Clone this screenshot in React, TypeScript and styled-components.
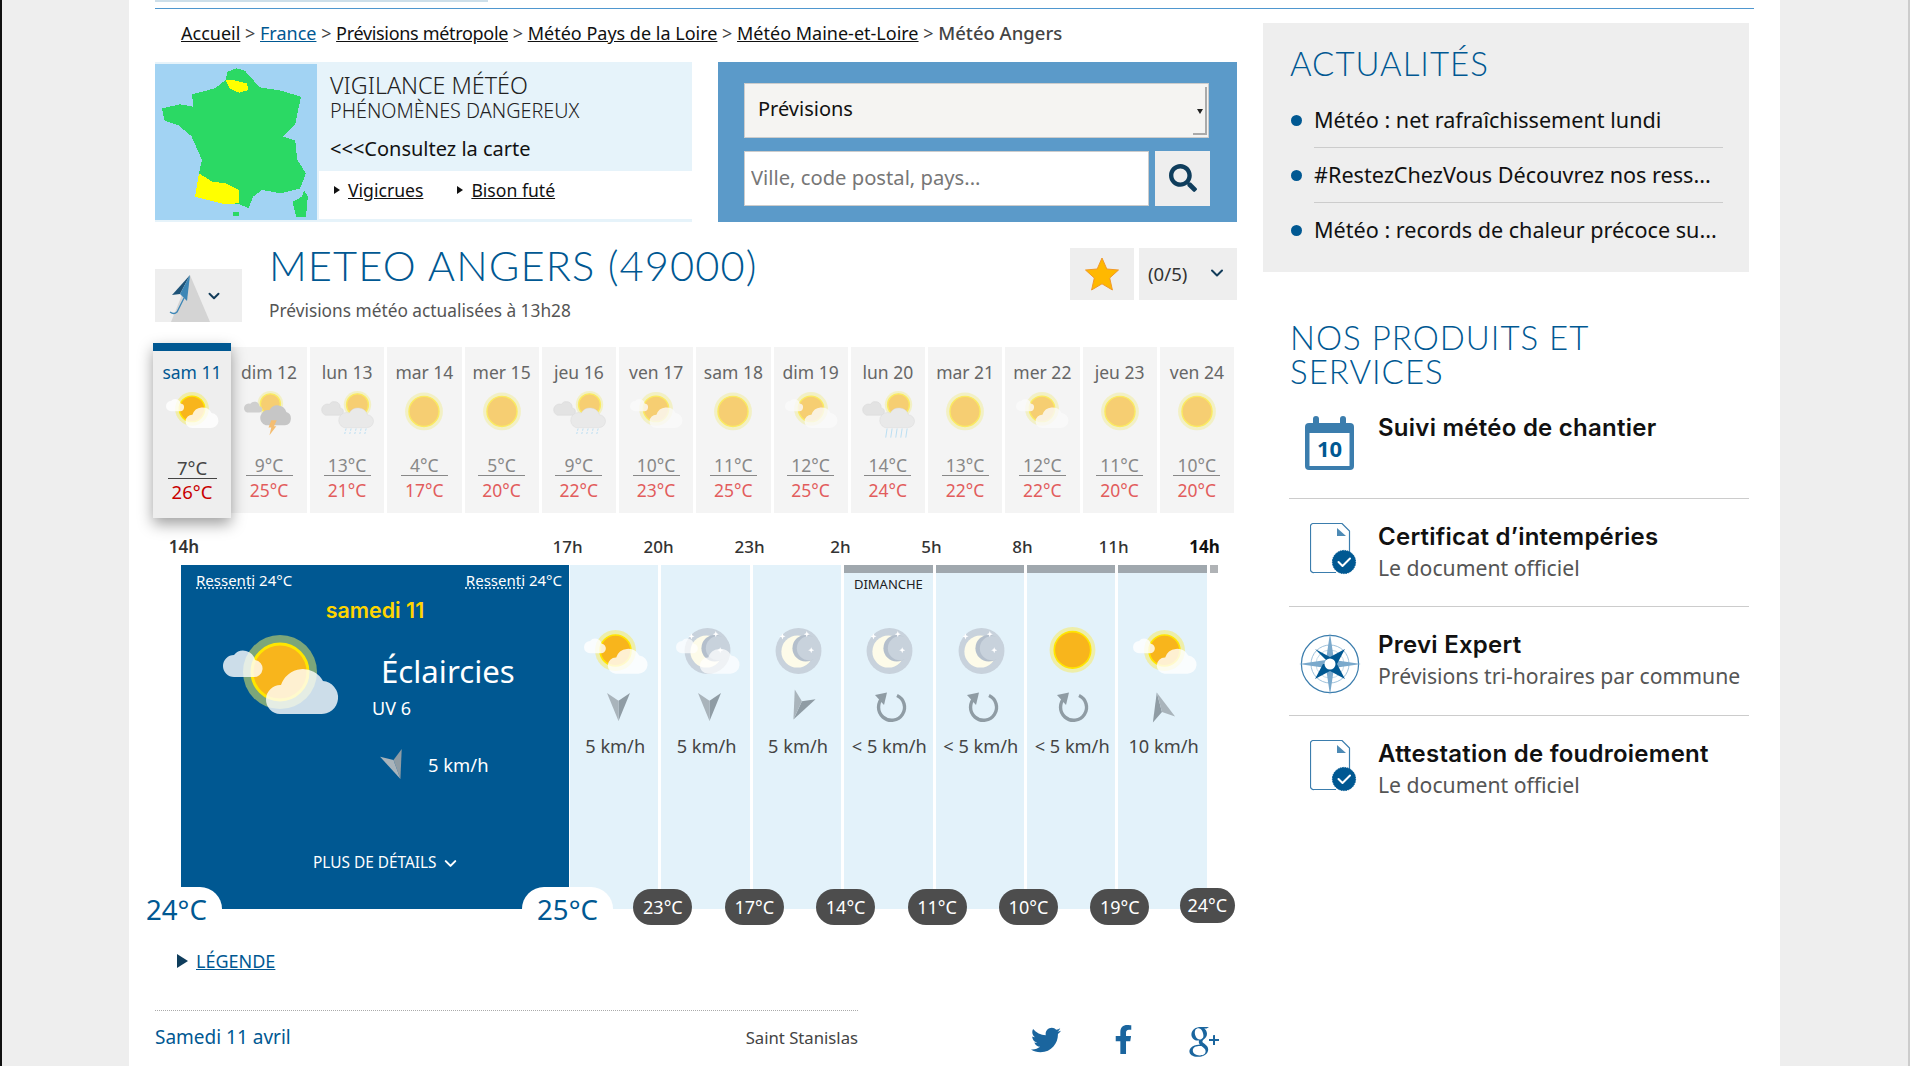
import React from 'react';
import styled, { createGlobalStyle } from 'styled-components';
import { ChevronDown } from 'lucide-react';
import { FaTwitter, FaFacebookF, FaSearch } from 'react-icons/fa';
import { TiSocialGooglePlus } from 'react-icons/ti';

const BLUE = '#005892';
const BODY = '"Noto Sans", "Open Sans", "Liberation Sans", sans-serif';
const LIGHT = '"Lato", "Open Sans", sans-serif';
const ROUND = '"Inter", "Lato", sans-serif';

const Global = createGlobalStyle`
  html, body { margin: 0; padding: 0; background: #eee; overflow: hidden; }
  * { box-sizing: border-box; }
  a { color: inherit; }
`;

const Page = styled.div`
  width: 1910px; height: 1066px; overflow: hidden; background: #eee;
  border-left: 2px solid #111; border-right: 2px solid #ccc;
  font-family: ${BODY}; color: #222;
`;
const Sheet = styled.div`
  margin-left: 127px; width: 1651px; height: 1066px; background: #fff; padding: 0 26px;
`;
const TopBand = styled.div`width: 333px; height: 2px; background: #cddfea;`;
const TopLine = styled.div`margin-top: 6px; height: 1px; background: #4f97cf;`;
const Columns = styled.div`display: flex; gap: 26px; padding-top: 14px;`;
const LeftCol = styled.div`width: 1082px; flex: none;`;
const RightCol = styled.div`width: 486px; flex: none;`;

const Crumbs = styled.nav`
  height: 39px; padding-left: 26px; font-size: 18px; line-height: 20px; color: #444;
  a { color: #111; }
  a.on { color: ${BLUE}; }
  a.tight { letter-spacing: -0.32px; }
`;
const CrumbHere = styled.span`font-size: 18.5px; font-weight: 500;`;
const TopRow = styled.div`display: flex; justify-content: space-between; height: 160px;`;

const Vigilance = styled.div`
  width: 537px; height: 160px; background: #e6f3fa; display: flex; padding-top: 2px;
`;
const MapFrame = styled.svg`width: 162px; height: 156px; flex: none; display: block;`;
const VigiBody = styled.div`flex: 1; margin-left: 2px; display: flex; flex-direction: column;`;
const VigiTop = styled.div`height: 107px; padding: 8px 0 0 11px; color: #222;`;
const VigiTitle = styled.div`font-weight: 300; font-size: 23.3px; line-height: 26px; color: #222;`;
const VigiSub = styled.div`font-weight: 300; font-size: 19.8px; line-height: 26px;`;
const VigiCta = styled.div`font-size: 20px; line-height: 26px; margin-top: 12px; color: #111;`;
const VigiLinks = styled.div`
  height: 48px; background: #fff; display: flex; align-items: center; padding-left: 15px; padding-bottom: 10px; font-size: 17.6px; gap: 34px;
  a { color: #111; }
`;
const VigiLink = styled.span`
  display: inline-flex; align-items: center; gap: 8px;
  &::before { content: ''; border-left: 6px solid #111; border-top: 4px solid transparent; border-bottom: 4px solid transparent; }
`;

const SearchBox = styled.div`
  width: 519px; height: 160px; background: #5b9ac9; padding: 21px 27px 0 26px;
`;
const FakeSelect = styled.div`
  height: 55px; width: 465px; background: #f5f4f2; border: 1px solid #ccc; display: flex; align-items: center;
  padding: 0 0 4px 13px; font-size: 20px; color: #111; position: relative;
  &::after { content: ''; position: absolute; right: 1px; top: 3px; bottom: 2px; width: 12px; border-right: 2px solid #aaa; border-bottom: 2px solid #aaa; clip-path: polygon(70% 0, 100% 0, 100% 100%, 0 100%, 0 96%, 70% 96%); }
  &::before { content: ''; position: absolute; right: 5px; top: 25px; border-top: 5px solid #222; border-left: 3px solid transparent; border-right: 3px solid transparent; }
`;
const SearchRow = styled.div`display: flex; margin-top: 13px; gap: 6px;`;
const CityInput = styled.input`
  width: 406px; height: 55px; background: #fff; border: 1px solid #ccc; padding: 0 6px 3px; font-family: ${BODY}; font-size: 20.2px; color: #333;
  &::placeholder { color: #777; opacity: 1; }
`;
const GoButton = styled.button`
  width: 55px; height: 55px; background: #eee; border: 0; padding: 0 0 2px; display: flex; align-items: center; justify-content: center; color: #0f3d5c;
`;

const TitleRow = styled.div`display: flex; height: 121px;`;
const UmbrellaBox = styled.div`
  width: 87px; height: 53px; margin-top: 47px; background: #eee; display: flex; align-items: center; padding-left: 11px; flex: none; color: #123c5a;
`;
const UmbrellaArt = styled.svg`flex: none; margin-right: -5px;`;
const TitleBlock = styled.div`margin-left: 27px; flex: 1; padding-top: 17px;`;
const PageTitle = styled.h1`
  margin: 0; font-family: ${LIGHT}; font-weight: 300; font-size: 41.6px; line-height: 52px; color: ${BLUE}; letter-spacing: 1.1px; white-space: nowrap;
`;
const Updated = styled.div`font-size: 17.3px; line-height: 24px; margin-top: 8px; color: #555;`;
const FavBlock = styled.div`display: flex; gap: 5px; margin-top: 26px; height: 52px;`;
const StarBtn = styled.div`width: 64px; background: #eee; display: flex; align-items: center; justify-content: center;`;
const CountBtn = styled.div`
  width: 98px; background: #eee; display: flex; align-items: center; padding: 0 0 2px 9px; gap: 20px; font-size: 18.6px; color: #333;
`;

const Strip = styled.div`display: flex; gap: 3px; height: 175px; align-items: flex-start; margin-left: -2px; width: 1081px;`;
const DayCell = styled.div<{ $on?: boolean; $wide?: boolean }>`
  position: relative; display: flex; flex-direction: column; align-items: center; background: ${p => p.$on ? '#eee' : '#f4f4f4'};
  ${p => p.$on ? `
    flex: 0 0 78px; height: 175px; margin-right: -3px; border-top: 8px solid ${BLUE}; padding-top: 11px; z-index: 2;
    box-shadow: 0 6px 14px rgba(0,0,0,.38);
  ` : `
    flex: ${p.$wide ? '0 0 76px' : '1 1 0'}; min-width: 0; height: 166px; margin-top: 4px; padding-top: 15px;
  `}
`;
const DayName = styled.div<{ $on?: boolean }>`
  font-size: 17.5px; line-height: 20px; white-space: nowrap; color: ${p => p.$on ? BLUE : '#666'};
`;
const DayIcon = styled.div<{ $on?: boolean; $drop?: boolean }>`
  height: 52px; margin-top: 10px; padding-top: ${p => p.$drop ? '3px' : '0'}; opacity: ${p => p.$on ? 1 : .6}; display: flex; justify-content: center; align-items: flex-start;
`;
const TempMin = styled.div<{ $on?: boolean }>`
  width: ${p => p.$on ? '49px' : '47px'}; text-align: center; border-bottom: 1px solid ${p => p.$on ? '#444' : '#888'};
  font-size: ${p => p.$on ? '18.5px' : '17.5px'}; line-height: 20px; margin-top: ${p => p.$on ? '14px' : '10.5px'}; color: ${p => p.$on ? '#444' : '#888'};
`;
const TempMax = styled.div<{ $on?: boolean }>`
  font-size: ${p => p.$on ? '18.5px' : '17.5px'}; line-height: 20px; margin-top: ${p => p.$on ? '3px' : '4px'}; color: ${p => p.$on ? '#c80000' : '#e25c5c'};
`;

const Hours = styled.div`display: flex; height: 47px; padding: 18px 0 0 9px; font-size: 17px; line-height: 22px; font-weight: 500; color: #333;`;
const HourFirst = styled.div`flex: none; width: 40px; text-align: center; font-weight: 600;`;
const Hour = styled.div<{ $bold?: boolean }>`
  flex: none; width: 91px; text-align: center; color: ${p => p.$bold ? '#111' : '#333'}; font-weight: ${p => p.$bold ? 700 : 500};
  &:nth-child(2) { margin-left: 318px; }
`;

const Forecast = styled.div`display: flex; height: 344px; margin-left: 26px; position: relative;`;
const Hero = styled.div`
  position: relative; width: 388px; background: ${BLUE}; color: #fff; display: flex; flex-direction: column; flex: none; z-index: 2; margin-right: 1px;
`;
const HeroFeel = styled.div`display: flex; justify-content: space-between; padding: 5px 7px 0 15px; font-size: 15px; line-height: 20px;`;
const Dotted = styled.span`text-decoration: underline dotted; text-underline-offset: 2px;`;
const HeroDay = styled.div`text-align: center; font-family: ${ROUND}; font-weight: 600; font-size: 21.4px; line-height: 26px; margin-top: 7px; color: #ffd500;`;
const HeroBody = styled.div`display: flex; padding: 12px 0 0 42px; gap: 35px;`;
const HeroText = styled.div`padding-top: 14px;`;
const HeroSky = styled.div`font-size: 31.2px; line-height: 44px; margin-left: 9px;`;
const HeroUv = styled.div`font-size: 18px; line-height: 22px; margin-top: 4px;`;
const HeroWind = styled.div`display: flex; align-items: center; gap: 21px; margin: 31px 0 0 12px; font-size: 18.4px; line-height: 30px;`;
const HeroMore = styled.div`margin-top: auto; padding: 0 0 36px 132px; font-size: 15.4px; line-height: 20px; display: flex; align-items: center; gap: 4px;`;

const Tab = styled.div<{ $side: 'l' | 'r' }>`
  position: absolute; top: 322px; height: 44px; background: #fff; color: ${BLUE}; font-size: 27.6px; line-height: 44px; text-align: center;
  ${p => p.$side === 'l'
    ? 'left: -35px; width: 76px; border-top-right-radius: 22px; text-align: left;'
    : 'left: 341px; width: 91px; border-radius: 22px 22px 0 0;'}
`;

const HourCol = styled.div<{ $night?: boolean }>`
  position: relative; width: 88.4px; margin-right: 3px; flex: none; background: #e3f2fa; display: flex; flex-direction: column; align-items: center;
  padding-top: ${p => p.$night ? '57px' : '65px'};
  border-top: ${p => p.$night ? '8px solid #a0a8ae' : '0'};
`;
const DayTag = styled.div`position: absolute; top: 2px; left: 0; right: 0; text-align: center; font-size: 13px; line-height: 18px; color: #222;`;
const HourIcon = styled.div`height: 50px; margin-left: 3px;`;
const WindSlot = styled.div<{ $dx: number }>`height: 34px; margin: 9px 0 0 ${p => p.$dx}px; display: flex; align-items: center; justify-content: center;`;
const SwirlArt = styled.svg`flex: none;`;
const Speed = styled.div`font-size: 18.2px; line-height: 24px; margin-top: 11px; padding-left: 2px; color: #444; white-space: nowrap;`;
const Badge = styled.div<{ $last?: boolean }>`
  position: absolute; background: #4d4d4d; color: #fff; text-align: center; z-index: 3; font-size: 18px;
  ${p => p.$last
    ? 'right: -28px; bottom: -14px; width: 55px; height: 35px; line-height: 34px; border-radius: 18px;'
    : 'right: -34px; bottom: -16px; width: 59px; height: 36px; line-height: 36px; border-radius: 18px;'}
`;
const Stub = styled.div`width: 8px; height: 8px; background: #b0b3b6; flex: none;`;

const Legend = styled.div`
  display: flex; align-items: center; gap: 8px; margin: 40px 0 0 22px; font-size: 18px; line-height: 24px; color: ${BLUE};
  &::before { content: ''; border-left: 11px solid #0f3d5c; border-top: 7px solid transparent; border-bottom: 7px solid transparent; }
`;
const FootRow = styled.div`display: flex; margin-top: 37px;`;
const Ephem = styled.div`
  width: 703px; border-top: 1px dotted #aaa; display: flex; justify-content: space-between; align-items: center; padding-top: 9px; line-height: 26px; height: 44px;
`;
const EphemDate = styled.div`font-size: 19px; color: ${BLUE};`;
const EphemSaint = styled.div`font-size: 16.7px; color: #444; padding-top: 2px;`;
const Social = styled.div`display: flex; align-items: flex-start; margin-left: 173px; padding-top: 15px; color: #1a659e;`;
const TwitterSlot = styled.div`width: 78px;`;
const FacebookSlot = styled.div`width: 70px;`;
const GoogleSlot = styled.div`margin-top: -8px;`;

const Actu = styled.section`height: 249px; width: 486px; background: #eee; padding: 23px 26px 0 27px;`;
const SideTitle = styled.h2`
  margin: 0; font-family: ${LIGHT}; font-weight: 300; font-size: 33px; line-height: 34px; color: ${BLUE}; letter-spacing: 1px;
`;
const ActuList = styled.div`margin-top: 13px;`;
const ActuItem = styled.div`display: flex; height: 55px; align-items: stretch;`;
const Dot = styled.span`flex: none; width: 11px; height: 11px; border-radius: 50%; background: ${BLUE}; margin: 22px 12px 0 1px;`;
const ActuText = styled.div<{ $rule?: boolean }>`
  flex: 1; font-size: 21.6px; line-height: 54px; color: #111; white-space: nowrap; border-bottom: ${p => p.$rule ? '1px solid #ccc' : '0'};
`;
const ProdHead = styled(SideTitle)`margin: 48px 0 2px 27px;`;
const ProdRow = styled.div<{ $rule?: boolean }>`
  display: flex; height: 108.5px; margin-left: 26px; padding-top: 24px; border-bottom: ${p => p.$rule ? '1px solid #ccc' : '0'};
`;
const ProdIcon = styled.div<{ $x: number; $y: number }>`width: 89px; flex: none; padding-left: ${p => p.$x}px; margin-top: ${p => p.$y - 1}px;`;
const ProdName = styled.div`font-family: ${ROUND}; font-weight: 600; font-size: 24px; line-height: 28px; letter-spacing: .25px; color: #111; white-space: nowrap;`;
const ProdSub = styled.div`font-size: 21.2px; line-height: 34px; color: #555; white-space: nowrap;`;
const BlockSvg = styled.svg`display: block;`;
const SkySvg = styled.svg`display: block; overflow: visible;`;
const KiteSvg = styled.svg`overflow: visible; flex: none;`;

type Sky = 'partly' | 'sun' | 'storm' | 'rain' | 'heavy' | 'moon' | 'moonCloud';

const CLOUD_L = 'M11 42 H30 A8.5 8.5 0 0 0 32 25 A12 12 0 0 0 11 20 A11 11 0 0 0 11 42 Z';
const CLOUD_R = 'M57 79 H97 A16.5 16.5 0 0 0 100 46 A23 23 0 0 0 58 50 A14.5 14.5 0 0 0 57 79 Z';

function SunDisc({ cx = 57, cy = 37, halo = 37, r = 28, haloFill = '#f2ec8e', haloOpacity = 0.75 }: { cx?: number; cy?: number; halo?: number; r?: number; haloFill?: string; haloOpacity?: number }) {
  return (
    <>
      <circle cx={cx} cy={cy} r={halo} fill={haloFill} opacity={haloOpacity} />
      <circle cx={cx} cy={cy} r={r} fill="#f8b51c" stroke="#ffe600" strokeWidth={3} />
    </>
  );
}
function Moon({ cy = 38 }: { cy?: number }) {
  return (
    <g>
      <circle cx={57} cy={cy} r={41.5} fill="#c8d2dc" />
      <circle cx={55} cy={cy + 1} r={29} fill="#fdfbe9" />
      <circle cx={70} cy={cy - 5} r={24} fill="#b4bfcc" />
      <circle cx={76} cy={cy - 5} r={22} fill="#c8d2dc" />
      <path d={`M28 ${cy - 32} l1.5 4 4 1.5 -4 1.5 -1.5 4 -1.5 -4 -4 -1.5 4 -1.5 Z M72 ${cy - 36} l1.5 4 4 1.5 -4 1.5 -1.5 4 -1.5 -4 -4 -1.5 4 -1.5 Z M80 ${cy - 7} l1.5 4 4 1.5 -4 1.5 -1.5 4 -1.5 -4 -4 -1.5 4 -1.5 Z`} fill="#fff" />
    </g>
  );
}

function WeatherIcon({ kind, width, dark }: { kind: Sky; width: number; dark?: boolean }) {
  return (
    <SkySvg width={width} height={(width * 90) / 114} viewBox="0 0 114 90">
      {kind === 'partly' && (
        <>
          <SunDisc haloFill={dark ? '#7ca67a' : '#f2ec8e'} haloOpacity={dark ? 1 : 0.75} />
          <path d={CLOUD_L} fill="#fff" opacity={0.8} />
          <path d={CLOUD_R} fill="#fff" opacity={0.8} />
        </>
      )}
      {kind === 'sun' && <SunDisc cy={36} halo={41.5} r={33} />}
      {kind === 'moon' && <Moon />}
      {kind === 'moonCloud' && (
        <>
          <Moon />
          <path d={CLOUD_L} fill="#fff" opacity={0.7} />
          <path d={CLOUD_R} fill="#fff" opacity={0.7} />
        </>
      )}
      {kind === 'storm' && (
        <>
          <SunDisc cx={60} cy={26} halo={28} r={22} />
          <path d="M9 45 H34 A7 7 0 0 0 36 31 A11 11 0 0 0 16 26 A10 10 0 0 0 9 45 Z" fill="#b7b7b7" />
          <path d="M50 73 H92 A15 15 0 0 0 95 44 A20 20 0 0 0 58 40 A17 17 0 0 0 50 73 Z" fill="#a8a8a8" />
          <path d="M62 62 H74 L68 75 H73 L58 95 L62 78 H56 Z" fill="#f59a1c" />
        </>
      )}
      {(kind === 'rain' || kind === 'heavy') && (
        <>
          <SunDisc cx={80} cy={28} halo={30} r={24} />
          <path d="M10 51 H40 A8 8 0 0 0 42 35 A13 13 0 0 0 18 27 A12 12 0 0 0 10 51 Z" fill="#d8d8d8" stroke="#c4c4c4" strokeWidth={1} />
          <path d="M50 78 H100 A14 14 0 0 0 102 50 A22 22 0 0 0 62 46 A16 16 0 0 0 50 78 Z" fill="#e2e2e2" stroke="#c8c8c8" strokeWidth={1} />
          <g stroke="#8ccdf2" strokeWidth={2} strokeDasharray={kind === 'heavy' ? undefined : '5 3'}>
            {[55, 66, 77, 88, 99].map(x => (
              <line key={x} x1={x} y1={80} x2={x - 3} y2={kind === 'heavy' ? 100 : 92} />
            ))}
          </g>
        </>
      )}
    </SkySvg>
  );
}

function Kite({ angle }: { angle: number }) {
  return (
    <KiteSvg width="23" height="29" viewBox="0 0 24 30" style={{ transform: `rotate(${angle}deg)` }}>
      <polygon points="12,0 0,29 12,21" fill="#8f9ca4" />
      <polygon points="12,0 24,29 12,21" fill="#a9b4bb" />
    </KiteSvg>
  );
}
function Swirl() {
  return (
    <SwirlArt width="36" height="34" viewBox="0 0 36 34" fill="none">
      <path d="M24 6.5 A13 13 0 1 1 10 8.5" stroke="#8f9ca4" strokeWidth="3.4" />
      <polygon points="2,6 14,3.5 11,16" fill="#8f9ca4" />
    </SwirlArt>
  );
}
function FranceMap() {
  return (
    <MapFrame viewBox="65 192 424 468" preserveAspectRatio="none" shapeRendering="crispEdges">
      <rect x="65" y="192" width="424" height="468" fill="#a2d3f3" />
      <polygon fill="#2bd964" points="278,205 300,212 315,232 340,262 395,272 447,290 437,345 432,372 400,410 432,422 437,478 460,520 445,565 395,580 345,570 322,590 310,625 285,612 245,612 170,590 180,520 188,480 160,408 125,375 90,362 83,325 130,313 165,320 162,283 222,265 250,240 255,215" />
      <polygon fill="#ffff00" points="250,240 270,240 305,250 310,270 285,278 260,265" />
      <polygon fill="#ffff00" points="180,520 215,545 250,550 285,570 285,610 245,612 170,590" />
      <polygon fill="#2bd964" points="455,570 465,590 460,652 435,652 425,605 450,590" />
      <rect x="268" y="635" width="18" height="12" fill="#2bd964" />
    </MapFrame>
  );
}
function Umbrella() {
  return (
    <UmbrellaArt width="44" height="53" viewBox="0 0 44 53">
      <polygon points="24,6 44,53 5,53" fill="#d4d4d4" />
      <polygon points="24,6 6,26 14,25" fill="#1e5378" />
      <polygon points="24,6 14,25 21,32" fill="#3c86b6" />
      <path d="M18 29 L11 43 Q8 46 4 43" stroke="#3c86b6" strokeWidth="1.3" fill="none" />
    </UmbrellaArt>
  );
}
function Star() {
  return (
    <svg width="34" height="34" viewBox="0 0 34 34">
      <polygon points="17,1 21.8,12 33.5,13 24.7,21 27.4,33 17,26.8 6.6,33 9.3,21 0.5,13 12.2,12" fill="#ffb800" stroke="#f0992a" strokeWidth="1" />
    </svg>
  );
}
function Calendar() {
  return (
    <BlockSvg width="49" height="54" viewBox="0 0 49 54">
      <rect x="8" y="0" width="6" height="12" rx="3" fill="#3b7dad" />
      <rect x="35" y="0" width="6" height="12" rx="3" fill="#3b7dad" />
      <rect x="0" y="7" width="49" height="47" rx="4" fill="#3b7dad" />
      <rect x="4.5" y="17" width="40" height="33" fill="#fff" />
      <text x="24.5" y="41" textAnchor="middle" fontFamily="Noto Sans, sans-serif" fontWeight="700" fontSize="22" fill="#005892">10</text>
    </BlockSvg>
  );
}
function DocCheck() {
  return (
    <BlockSvg width="48" height="52" viewBox="0 0 48 52">
      <path d="M3 .5 H32 L39.5 8 V30 M26 49.5 H4 A3 3 0 0 1 .5 46.5 V4 A3 3 0 0 1 3 .5" fill="none" stroke="#3b7dad" strokeWidth="1.2" />
      <polygon points="27,5 36,13 27,13" fill="#4d8ab5" />
      <circle cx="34" cy="39" r="11.6" fill="#005892" stroke="#005892" strokeWidth="1" strokeDasharray="1.5 1" />
      <path d="M28.5 39 L32.5 43 L40 35.5" fill="none" stroke="#fff" strokeWidth="2" strokeLinecap="round" strokeLinejoin="round" />
    </BlockSvg>
  );
}
function Compass() {
  const long = 'M32 1 L36 28 L63 32 L36 36 L32 63 L28 36 L1 32 L28 28 Z';
  const diag = 'M32 32 L17 17 L32 25 L47 17 L39 32 L47 47 L32 39 L17 47 L25 32 Z';
  return (
    <BlockSvg width="64" height="64" viewBox="0 0 64 64">
      <circle cx="32" cy="32" r="28.6" fill="none" stroke="#3b7dad" strokeWidth="1.2" />
      <circle cx="32" cy="32" r="19" fill="none" stroke="#9cc0da" strokeWidth="1" />
      <circle cx="32" cy="32" r="14" fill="none" stroke="#c5dbe9" strokeWidth="1" />
      <path d={long} fill="#7aa9cc" />
      <path d={diag} fill="#005892" />
      <circle cx="32" cy="32" r="5.5" fill="#fff" />
    </BlockSvg>
  );
}

const days: { d: string; k: Sky; lo: number; hi: number }[] = [
  { d: 'sam 11', k: 'partly', lo: 7, hi: 26 },
  { d: 'dim 12', k: 'storm', lo: 9, hi: 25 },
  { d: 'lun 13', k: 'rain', lo: 13, hi: 21 },
  { d: 'mar 14', k: 'sun', lo: 4, hi: 17 },
  { d: 'mer 15', k: 'sun', lo: 5, hi: 20 },
  { d: 'jeu 16', k: 'rain', lo: 9, hi: 22 },
  { d: 'ven 17', k: 'partly', lo: 10, hi: 23 },
  { d: 'sam 18', k: 'sun', lo: 11, hi: 25 },
  { d: 'dim 19', k: 'partly', lo: 12, hi: 25 },
  { d: 'lun 20', k: 'heavy', lo: 14, hi: 24 },
  { d: 'mar 21', k: 'sun', lo: 13, hi: 22 },
  { d: 'mer 22', k: 'partly', lo: 12, hi: 22 },
  { d: 'jeu 23', k: 'sun', lo: 11, hi: 20 },
  { d: 'ven 24', k: 'sun', lo: 10, hi: 20 },
];

const slots: { k: Sky; wind: number | null; dx: number; speed: string; t: string; night?: boolean; tag?: string }[] = [
  { k: 'partly', wind: 180, dx: 8, speed: '5 km/h', t: '23°C' },
  { k: 'moonCloud', wind: 180, dx: 8, speed: '5 km/h', t: '17°C' },
  { k: 'moon', wind: 205, dx: 5, speed: '5 km/h', t: '14°C' },
  { k: 'moon', wind: null, dx: 6, speed: '< 5 km/h', t: '11°C', night: true, tag: 'DIMANCHE' },
  { k: 'moon', wind: null, dx: 6, speed: '< 5 km/h', t: '10°C', night: true },
  { k: 'sun', wind: null, dx: 4, speed: '< 5 km/h', t: '19°C', night: true },
  { k: 'partly', wind: -15, dx: -4, speed: '10 km/h', t: '24°C', night: true },
];

const hours = ['17h', '20h', '23h', '2h', '5h', '8h', '11h'];

export default function App() {
  return (
    <Page>
      <Global />
      <Sheet>
        <TopBand />
        <TopLine />
        <Columns>
          <LeftCol>
            <Crumbs>
              <a href="#">Accueil</a> &gt; <a className="on" href="#">France</a> &gt; <a className="tight" href="#">Prévisions métropole</a> &gt; <a href="#">Météo Pays de la Loire</a> &gt; <a href="#">Météo Maine-et-Loire</a> &gt; <CrumbHere>Météo Angers</CrumbHere>
            </Crumbs>
            <TopRow>
              <Vigilance>
                <FranceMap />
                <VigiBody>
                  <VigiTop>
                    <VigiTitle>VIGILANCE MÉTÉO</VigiTitle>
                    <VigiSub>PHÉNOMÈNES DANGEREUX</VigiSub>
                    <VigiCta>&lt;&lt;&lt;Consultez la carte</VigiCta>
                  </VigiTop>
                  <VigiLinks>
                    <VigiLink><a href="#">Vigicrues</a></VigiLink>
                    <VigiLink><a href="#">Bison futé</a></VigiLink>
                  </VigiLinks>
                </VigiBody>
              </Vigilance>
              <SearchBox>
                <FakeSelect>Prévisions</FakeSelect>
                <SearchRow>
                  <CityInput placeholder="Ville, code postal, pays..." />
                  <GoButton aria-label="Rechercher"><FaSearch size={28} /></GoButton>
                </SearchRow>
              </SearchBox>
            </TopRow>
            <TitleRow>
              <UmbrellaBox><Umbrella /><ChevronDown size={18} strokeWidth={2.6} /></UmbrellaBox>
              <TitleBlock>
                <PageTitle>METEO ANGERS (49000)</PageTitle>
                <Updated>Prévisions météo actualisées à 13h28</Updated>
              </TitleBlock>
              <FavBlock>
                <StarBtn><Star /></StarBtn>
                <CountBtn>(0/5)<ChevronDown size={20} strokeWidth={2.4} color="#123c5a" /></CountBtn>
              </FavBlock>
            </TitleRow>
            <Strip>
              {days.map((x, i) => (
                <DayCell key={x.d} $on={i === 0} $wide={i === 1}>
                  <DayName $on={i === 0}>{x.d}</DayName>
                  <DayIcon $on={i === 0} $drop={x.k === 'sun'}><WeatherIcon kind={x.k} width={52} /></DayIcon>
                  <TempMin $on={i === 0}>{x.lo}°C</TempMin>
                  <TempMax $on={i === 0}>{x.hi}°C</TempMax>
                </DayCell>
              ))}
            </Strip>
            <Hours>
              <HourFirst>14h</HourFirst>
              {hours.map(h => <Hour key={h}>{h}</Hour>)}
              <Hour $bold>14h</Hour>
            </Hours>
            <Forecast>
              <Hero>
                <HeroFeel>
                  <span><Dotted>Ressenti</Dotted> 24°C</span>
                  <span><Dotted>Ressenti</Dotted> 24°C</span>
                </HeroFeel>
                <HeroDay>samedi 11</HeroDay>
                <HeroBody>
                  <WeatherIcon kind="partly" width={114} dark />
                  <HeroText>
                    <HeroSky>Éclaircies</HeroSky>
                    <HeroUv>UV 6</HeroUv>
                    <HeroWind><Kite angle={160} />5 km/h</HeroWind>
                  </HeroText>
                </HeroBody>
                <HeroMore>PLUS DE DÉTAILS <ChevronDown size={19} strokeWidth={2.6} /></HeroMore>
                <Tab $side="l">24°C</Tab>
                <Tab $side="r">25°C</Tab>
              </Hero>
              {slots.map((s, i) => (
                <HourCol key={i} $night={s.night}>
                  {s.tag && <DayTag>{s.tag}</DayTag>}
                  <HourIcon><WeatherIcon kind={s.k} width={63} /></HourIcon>
                  <WindSlot $dx={s.dx}>{s.wind === null ? <Swirl /> : <Kite angle={s.wind} />}</WindSlot>
                  <Speed>{s.speed}</Speed>
                  <Badge $last={i === slots.length - 1}>{s.t}</Badge>
                </HourCol>
              ))}
              <Stub />
            </Forecast>
            <Legend><a href="#">LÉGENDE</a></Legend>
            <FootRow>
              <Ephem>
                <EphemDate>Samedi 11 avril</EphemDate>
                <EphemSaint>Saint Stanislas</EphemSaint>
              </Ephem>
              <Social>
                <TwitterSlot><FaTwitter size={30} /></TwitterSlot>
                <FacebookSlot><FaFacebookF size={29} /></FacebookSlot>
                <GoogleSlot><TiSocialGooglePlus size={48} /></GoogleSlot>
              </Social>
            </FootRow>
          </LeftCol>
          <RightCol>
            <Actu>
              <SideTitle>ACTUALITÉS</SideTitle>
              <ActuList>
                <ActuItem><Dot /><ActuText $rule>Météo : net rafraîchissement lundi</ActuText></ActuItem>
                <ActuItem><Dot /><ActuText $rule>#RestezChezVous Découvrez nos ress...</ActuText></ActuItem>
                <ActuItem><Dot /><ActuText>Météo : records de chaleur précoce su...</ActuText></ActuItem>
              </ActuList>
            </Actu>
            <ProdHead>NOS PRODUITS ET<br />SERVICES</ProdHead>
            <ProdRow $rule>
              <ProdIcon $x={16} $y={3}><Calendar /></ProdIcon>
              <div><ProdName>Suivi météo de chantier</ProdName></div>
            </ProdRow>
            <ProdRow $rule>
              <ProdIcon $x={21} $y={1}><DocCheck /></ProdIcon>
              <div><ProdName>Certificat d’intempéries</ProdName><ProdSub>Le document officiel</ProdSub></div>
            </ProdRow>
            <ProdRow $rule>
              <ProdIcon $x={9} $y={2}><Compass /></ProdIcon>
              <div><ProdName>Previ Expert</ProdName><ProdSub>Prévisions tri-horaires par commune</ProdSub></div>
            </ProdRow>
            <ProdRow>
              <ProdIcon $x={21} $y={1}><DocCheck /></ProdIcon>
              <div><ProdName>Attestation de foudroiement</ProdName><ProdSub>Le document officiel</ProdSub></div>
            </ProdRow>
          </RightCol>
        </Columns>
      </Sheet>
    </Page>
  );
}
